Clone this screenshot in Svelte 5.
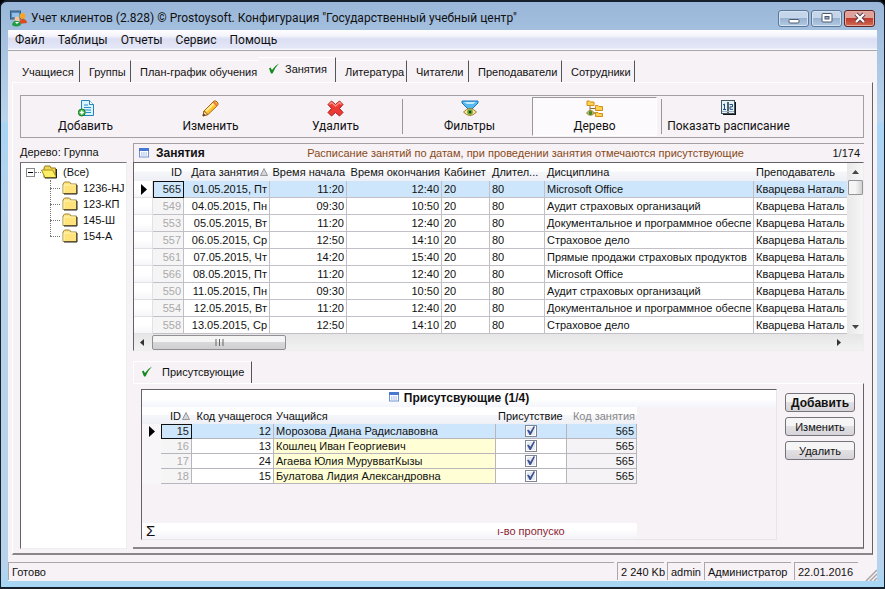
<script>
  const menu = ['Файл', 'Таблицы', 'Отчеты', 'Сервис', 'Помощь'];

  const tabs = [
    { name: 'Учащиеся', width: 64, line: true },
    { name: 'Группы', width: 51, line: true },
    { name: 'План-график обучения', width: 128 },
    { name: 'Занятия', width: 77, line: true, active: true },
    { name: 'Литература', width: 71, line: true },
    { name: 'Читатели', width: 62, line: true },
    { name: 'Преподаватели', width: 93, line: true },
    { name: 'Сотрудники', width: 73, line: true }
  ];

  const tree = ['1236-HJ', '123-КП', '145-Ш', '154-А'];

  const office = 'Microsoft Office';
  const audit = 'Аудит страховых организаций';
  const docs = 'Документальное и программное обеспе';
  const insurance = 'Страховое дело';
  const sales = 'Прямые продажи страховых продуктов';

  const lessons = [
    [565, '01.05.2015, Пт', '11:20', '12:40', office],
    [549, '04.05.2015, Пн', '09:30', '10:50', audit],
    [553, '05.05.2015, Вт', '11:20', '12:40', docs],
    [557, '06.05.2015, Ср', '12:50', '14:10', insurance],
    [561, '07.05.2015, Чт', '14:20', '15:40', sales],
    [566, '08.05.2015, Пт', '11:20', '12:40', office],
    [550, '11.05.2015, Пн', '09:30', '10:50', audit],
    [554, '12.05.2015, Вт', '11:20', '12:40', docs],
    [558, '13.05.2015, Ср', '12:50', '14:10', insurance]
  ];

  const students = [
    [15, 12, 'Морозова Диана Радиславовна'],
    [16, 13, 'Кошлец Иван Георгиевич'],
    [17, 24, 'Агаева Юлия МурувватКызы'],
    [18, 15, 'Булатова Лидия Александровна']
  ];
</script>

{#snippet check()}
  <svg class="tick" width="12" height="11" viewBox="0 0 12 11"><path d="M1 5.500L2.500 4.500L4 7Q7 2.500 11 .5Q7 4.500 4.500 10.500H3Z" fill="#138a1c" /></svg>
{/snippet}

{#snippet gridIcon()}
  <svg class="grid-icon" width="10" height="10" viewBox="0 0 10 10">
    <rect x=".5" y=".5" width="9" height="8.500" fill="#fff" stroke="#6f93d2" />
    <path d="M0 0h10v3H0z" fill="#4878cf" /><path d="M2 5h6M2 7h6" stroke="#8ba9dd" stroke-dasharray="1.500 .7" />
  </svg>
{/snippet}

{#snippet sortMark()}
  <svg class="sort" width="8" height="8" viewBox="0 0 8 8"><path d="M.5 7.500L4 .5L7.500 7.500Z" fill="#d5d5d8" stroke="#98989d" /></svg>
{/snippet}

{#snippet rowMark()}
  <svg class="row-mark" width="6" height="11" viewBox="0 0 6 11"><path d="M0 0L6 5.500L0 11Z" /></svg>
{/snippet}

{#snippet folder()}
  <svg width="16" height="14" viewBox="0 0 16 14">
    <path d="M1 12.500V3l1.500-2h5L9 3h5.500v9.500Z" fill="#ffe27a" stroke="#9b8440" />
    <path d="M2 12V4h11" stroke="#fff6b8" fill="none" /><path d="M15 4v9H2" stroke="#222" fill="none" />
  </svg>
{/snippet}

<div class="window">
  <header class="titlebar">
    <svg width="18" height="17" viewBox="0 0 18 17">
      <rect x=".5" y="1" width="10" height="8" fill="#5487b8" stroke="#345778" /><path d="M2 3h7v4H2z" fill="#8fc0e8" />
      <circle cx="12.500" cy="6" r="3" fill="#f3a52c" /><path d="M9 14q1-6 5-5 3 1 3 4z" fill="#dc4a22" />
      <circle cx="7" cy="9" r="2.500" fill="#f4c795" /><path d="M2 15q1-5 5-4 4 0 4 4-5 3-9 0z" fill="#229c48" /><path d="M5 12h4l-2 2z" fill="#fff" />
    </svg>
    <h1>Учет клиентов (2.828) © Prostoysoft. Конфигурация "Государственный учебный центр"</h1>
    <div class="controls">
      <button aria-label="Свернуть"><svg width="12" height="12" viewBox="0 0 12 12"><rect x="1" y="7.500" width="10" height="3.500" rx="1" fill="#fff" stroke="#4b5a70" /></svg></button>
      <button aria-label="Развернуть"><svg width="12" height="12" viewBox="0 0 12 12"><rect x="1" y="1.500" width="10" height="8.500" rx="1" fill="#fff" stroke="#4b5a70" /><rect x="4" y="4.500" width="4" height="2.500" fill="#91acd0" stroke="#4b5a70" /></svg></button>
      <button class="close" aria-label="Закрыть"><svg width="12" height="12" viewBox="0 0 12 12"><path d="M2 2L10 10M10 2L2 10" stroke="#543d4b" stroke-width="4" /><path d="M2 2L10 10M10 2L2 10" stroke="#fff" stroke-width="2.200" /></svg></button>
    </div>
  </header>

  <div class="client">
    <nav class="menu">
      {#each menu as item}<button>{item}</button>{/each}
    </nav>

    <div class="tabs" role="tablist">
      {#each tabs as tab}
        <button role="tab" aria-selected={!!tab.active} class:line={tab.line} class:active={tab.active} style:width="{tab.width}px">
          {#if tab.active}{@render check()}{/if}{tab.name}
        </button>
      {/each}
    </div>

    <main class="page">
      <div class="toolbar">
        <button>
          <svg width="16" height="17" viewBox="0 0 16 17"><path d="M3.500.5h8l4 4v11h-12z" fill="#d9f3ff" stroke="#2781ba" /><path d="M11.500.5v4h4" fill="#fff" stroke="#2781ba" /><path d="M6 5h4M6 7.500h7M6 10h7M8 12.500h5" stroke="#2d8fc9" /><circle cx="3.800" cy="12.500" r="3.500" fill="#43b649" stroke="#177c27" /><path d="M3.800 10.500v4M1.800 12.500h4" stroke="#fff" stroke-width="1.400" /></svg>
          Добавить
        </button>
        <button>
          <svg width="17" height="17" viewBox="0 0 17 17"><path d="M1 16l1-5L12 1q2-1 4 2 .5 1.500-1 3L6 14.500Z" fill="#ffc52e" stroke="#a56416" /><path d="M4 11L13 2.500" stroke="#ffed9a" stroke-width="2" /><path d="M2 11l4 3.500L1 16z" fill="#f7dab1" stroke="#a56416" /><path d="M11.500 2l4 4" stroke="#e87d4c" stroke-width="2" /><path d="M1 16l.5-2.500L3.500 15z" fill="#333" /></svg>
          Изменить
        </button>
        <button>
          <svg width="17" height="17" viewBox="0 0 17 17"><path d="M4.500 1L8.500 4.500L12.500 1L16 4.500L12.500 8.500L16 12.500L12.500 16L8.500 12.500L4.500 16L1 12.500L4.500 8.500L1 4.500Z" fill="#ec3a35" stroke="#a71d1d" /><path d="M2.500 4.500l2-2 4 3.500 4-3.500 2 2" fill="none" stroke="#ff8f82" stroke-width="1.400" /></svg>
          Удалить
        </button>
        <span class="divider"></span>
        <button>
          <svg width="18" height="17" viewBox="0 0 18 17"><path d="M1 1h16v2l-6 6H7L1 3z" fill="#54baf0" stroke="#1d73b4" /><path d="M3 2h12l-3 2H6z" fill="#c5edff" /><path d="M2.500 12q6.500-7 13 0-6.500 7-13 0z" fill="#f7e4a1" stroke="#a77a20" /><circle cx="9" cy="12" r="2.800" fill="#62a432" /><circle cx="9" cy="12" r="1.200" fill="#1b4215" /></svg>
          Фильтры
        </button>
        <button class="pressed" aria-pressed="true">
          <svg width="17" height="17" viewBox="0 0 17 17"><path d="M4 6v7h7M4 8.500h7" fill="none" stroke="#877040" /><g fill="#ffd34d" stroke="#d28d1c"><path d="M1 5.500V1h2.500l1 1H8v3.500zM9.500 10.500v-5H12l1 1h3.500v4zM9.500 16.500v-4H12l1 1h3.500v3z" /></g><path d="M.5 13q4-5 8 0-4 4.500-8 0z" fill="#eacf80" stroke="#8d7a25" /><circle cx="4.500" cy="13" r="2" fill="#458a28" /></svg>
          Дерево
        </button>
        <span class="divider"></span>
        <button>
          <svg width="15" height="15" viewBox="0 0 15 15"><path d="M2 14.500h12.500V2" fill="none" stroke="#111" stroke-width="1.500" /><rect x=".5" y=".5" width="13" height="13" fill="#e3f1f8" stroke="#44525c" /><path d="M7 2v11" stroke="#111" stroke-width="1.300" /><path d="M2 5l1.500-1v5M2 9.500h3M8.500 4.500h3v2.300h-2.500V9.300h3" fill="none" stroke="#184e85" /><path d="M1 11.500h12" stroke="#9fb4c0" /></svg>
          Показать расписание
        </button>
      </div>

      <div class="columns">
        <aside>
          <div class="tree-title">Дерево: Группа</div>
          <div class="tree">
            <div class="node root">
              <svg class="fold" width="9" height="9" viewBox="0 0 9 9"><rect x=".5" y=".5" width="8" height="8" fill="#fff" stroke="#888" /><path d="M2 4.500h5" stroke="#000" /></svg>
              <span class="dots"></span>
              <svg width="17" height="14" viewBox="0 0 17 14"><path d="M3 12.500V3l1-2h5l1 2h4.500v9.500z" fill="#f5d653" stroke="#8f7b20" /><path d="M.5 5h11l4 7.500H4z" fill="#ffed64" stroke="#a59122" /><path d="M15.500 4v9H4" fill="none" stroke="#222" /></svg>
              <button>(Все)</button>
            </div>
            <div class="branch">
              {#each tree as group}
                <div class="node"><span class="dots"></span>{@render folder()}<button>{group}</button></div>
              {/each}
            </div>
          </div>
        </aside>

        <div class="content">
          <div class="caption">
            {@render gridIcon()}
            <h2>Занятия</h2>
            <p>Расписание занятий по датам, при проведении занятия отмечаются присутствующие</p>
            <span>1/174</span>
          </div>

          <div class="grid">
            <div class="grid-body">
              <table class="lessons">
                <colgroup><col class="w-mark" /><col class="w-id" /><col class="w-date" /><col class="w-start" /><col class="w-end" /><col class="w-room" /><col class="w-length" /><col class="w-subject" /><col /></colgroup>
                <thead>
                  <tr><th></th><th class="num">ID</th><th class="num">Дата занятия{@render sortMark()}</th><th class="num">Время начала</th><th class="num">Время окончания</th><th>Кабинет</th><th>Длител...</th><th>Дисциплина</th><th>Преподаватель</th></tr>
                </thead>
                <tbody>
                  {#each lessons as [id, date, start, end, subject], i}
                    <tr class:selected={i === 0}>
                      <td class="mark">{#if i === 0}{@render rowMark()}{/if}</td>
                      <td class="num id">{id}</td><td class="num">{date}</td><td class="num">{start}</td><td class="num">{end}</td>
                      <td>20</td><td>80</td><td>{subject}</td><td class="teacher">Кварцева Наталь</td>
                    </tr>
                  {/each}
                </tbody>
              </table>
              <div class="vscroll">
                <svg width="7" height="4" viewBox="0 0 7 4"><path d="M0 4L3.500 0L7 4z" fill="#444" /></svg>
                <i></i>
                <svg width="7" height="4" viewBox="0 0 7 4"><path d="M0 0L3.500 4L7 0z" fill="#444" /></svg>
              </div>
            </div>
            <div class="hscroll">
              <svg width="4" height="7" viewBox="0 0 4 7"><path d="M4 0L0 3.500L4 7z" fill="#333" /></svg>
              <i><svg width="9" height="7" viewBox="0 0 9 7"><path d="M1 0v7M4.500 0v7M8 0v7" stroke="#666" /></svg></i>
              <svg class="right" width="4" height="7" viewBox="0 0 4 7"><path d="M0 0L4 3.500L0 7z" fill="#333" /></svg>
            </div>
          </div>

          <div class="subtabs" role="tablist">
            <button role="tab" aria-selected="true">{@render check()}Присутсвующие</button>
          </div>
          <section class="subpage">
            <div class="present">
              <div class="present-title">{@render gridIcon()}<h2>Присутсвующие (1/4)</h2></div>
              <table class="students">
                <colgroup><col class="w-mark" /><col class="w-id" /><col class="w-code" /><col class="w-name" /><col class="w-check" /><col class="w-lesson" /></colgroup>
                <thead>
                  <tr><th></th><th class="num">ID{@render sortMark()}</th><th class="num">Код учащегося</th><th>Учащийся</th><th>Присутствие</th><th class="num muted">Код занятия</th></tr>
                </thead>
                <tbody>
                  {#each students as [id, code, name], i}
                    <tr class:selected={i === 0}>
                      <td class="mark">{#if i === 0}{@render rowMark()}{/if}</td>
                      <td class="num id">{id}</td><td class="num">{code}</td><td class="name">{name}</td>
                      <td class="box"><input type="checkbox" checked aria-label={name} /></td>
                      <td class="num lesson">565</td>
                    </tr>
                  {/each}
                </tbody>
              </table>
              <div class="totals"><b>Σ</b><span>ı-во пропуско</span></div>
            </div>
            <div class="actions">
              <button class="default">Добавить</button>
              <button>Изменить</button>
              <button>Удалить</button>
            </div>
          </section>
        </div>
      </div>
    </main>

    <footer class="status">
      <span class="grow">Готово</span><span class="memory">2 240 Kb</span><span class="user">admin</span><span class="role">Администратор</span><span class="date">22.01.2016</span>
      <svg width="12" height="12" viewBox="0 0 12 12"><path d="M1 12L12 1M5 12L12 5M9 12L12 9" stroke="#aaa5aa" stroke-width="1.500" /></svg>
    </footer>
  </div>
</div>

<style>
  :global(body) { margin: 0; background: #000; }
  * { box-sizing: border-box; }
  .window {
    display: flex; flex-direction: column; min-height: 100vh; padding: 0 7px 6px; overflow: hidden;
    border: 1px solid #15202c; border-width: 2px 1px 2px 1px; border-radius: 7px 7px 0 0;
    background: linear-gradient(#9ab6d8 0, #a4c0df 30px, #bad4ec 118px, #a9d5f5 122px, #b8d2ec 220px, #b8d2ec 560px, #a6d6f4 100%);
    font: 11px/14px "Liberation Sans", Arial, sans-serif; color: #111;
  }
  button { font: inherit; color: inherit; border: 0; background: none; padding: 0; margin: 0; white-space: nowrap; }
  h1, h2, p { margin: 0; font-size: 12px; white-space: nowrap; }
  svg { display: block; flex: none; }

  .titlebar { display: flex; align-items: center; height: 28px; gap: 3px; padding: 4px 2px 0; }
  h1 { flex: 1; font: 12px/16px Roboto, sans-serif; }
  .controls { display: flex; gap: 2px; }
  .controls button {
    display: grid; place-items: center; width: 31px; height: 17px; border: 1px solid #5c7697; border-radius: 3px;
    background: linear-gradient(#c5d6ea 45%, #98b3d2 50%, #b4cae2); box-shadow: inset 0 0 0 1px #d4e2f1;
  }
  .controls .close { border-color: #5f2424; background: linear-gradient(#dfa29a 45%, #bf3b2e 50%, #cf6b50); box-shadow: inset 0 0 0 1px #e5aaa0; }

  .client { flex: 1; display: flex; flex-direction: column; background: #f7f2f6; }
  .menu {
    display: flex; gap: 13px; height: 21px; padding: 0 7px; border-bottom: 1px solid #a8a5aa;
    background: linear-gradient(#fff 0, #f3f3fb 30%, #dcdff3 45%, #e4e7f7 90%, #fff);
    font: 12px/20px Roboto, sans-serif;
  }

  .tabs { display: flex; align-items: flex-end; height: 31px; padding: 0 8px; }
  .tabs button { display: flex; align-items: center; gap: 5px; height: 22px; padding-left: 6px; border-top: 1px solid #fff; }
  .tabs button:not(:first-child) { padding-left: 9px; }
  .tabs .line { border-right: 1px solid #555; }
  .tabs .active { height: 25px; padding-bottom: 3px; }

  .page { flex: 1; display: flex; flex-direction: column; margin: 0 4px; padding: 12px 8px 4px 7px; border: 1px solid #fff; border-right: 1px solid #666166; border-bottom: 2px solid #8a858a; }
  .toolbar { display: flex; height: 43px; padding: 1px 2px; border: 1px solid #a39fa3; font: 12px/16px Roboto, sans-serif; }
  .toolbar button { display: flex; flex-direction: column; align-items: center; justify-content: space-between; width: 125px; padding: 2px 0 1px; border: 1px solid transparent; }
  .toolbar .pressed { border-color: #9a969a #fff #fff #9a969a; background: #fcfafc; }
  .divider { width: 1px; margin: 2px 4px; background: #9a969a; }

  .columns { flex: 1; display: flex; gap: 6px; padding-top: 5px; }
  aside { display: flex; flex-direction: column; width: 107px; }
  .tree-title { height: 19px; line-height: 18px; }
  .tree { flex: 1; padding: 1px 0 0 5px; background: #fff; border: 1px solid #eee; border-top-color: #777; border-left: 1px solid #666166; overflow: hidden; }
  .node { display: flex; align-items: center; height: 16px; }
  .node .dots { width: 10px; margin-right: 2px; border-top: 1px dotted #777; }
  .root .dots { width: 6px; margin-right: 0; }
  .node button { margin-left: 5px; }
  .branch { position: relative; margin-left: 24px; }
  .branch::before { content: ""; position: absolute; left: 0; top: 0; height: 56px; border-left: 1px dotted #777; }

  .content { flex: 1; min-width: 0; display: flex; flex-direction: column; }
  .caption { display: flex; align-items: center; height: 19px; padding: 0 4px 0 5px; border: 1px solid #a39fa3; border-width: 1px 0 0 1px; }
  .caption h2 { margin-left: 7px; }
  .caption p { flex: 1; padding-left: 14px; text-align: center; font-size: 11px; color: #8a4a17; }

  .grid { border: 1px solid #eee; border-top-color: #666166; border-left-color: #666166; background: #fff; }
  .grid-body { display: flex; }
  table { table-layout: fixed; border-collapse: separate; border-spacing: 0; }
  .lessons { flex: 1; width: 0; min-width: 0; }
  .w-mark { width: 19px; } .w-id { width: 31px; } .w-date { width: 86px; } .w-start { width: 77px; } .w-end { width: 95px; }
  .w-room { width: 48px; } .w-length { width: 55px; } .w-subject { width: 209px; }
  .w-code { width: 82px; } .w-name { width: 222px; } .w-check { width: 71px; } .w-lesson { width: 70px; }
  th, td { height: 17px; padding: 0 2px; overflow: hidden; white-space: nowrap; line-height: 16px; text-align: left; font-weight: 400; }
  th { height: 18px; background: linear-gradient(#fff 45%, #f5f6fa 50%, #eff0f5); }
  td { border-right: 1px solid #c2c0c6; border-bottom: 1px solid #c2c0c6; background: #fff; }
  td:last-child { border-right: 0; }
  .teacher { padding-right: 0; }
  .num { text-align: right; }
  .id { color: #aaa; background: #f6f5f6; }
  .mark { padding: 0 0 0 7px; border-color: #e3e1e6; background: linear-gradient(#fff 50%, #f6f5f9); }
  .selected td:not(.mark) { background: #cde6fb; }
  .selected .id { color: #222; outline: 1px solid #111; outline-offset: -1px; }
  .sort { display: inline-block; margin-left: 1px; }
  .vscroll { display: flex; flex-direction: column; align-items: center; width: 16px; padding: 7px 0 5px; background: linear-gradient(90deg, #e9e8e9, #f7f6f7); }
  .vscroll i { width: 15px; height: 15px; margin: 6px 0 auto; border: 1px solid #969499; border-radius: 1px; background: linear-gradient(90deg, #f5f5f5 50%, #d2d2d4); }
  .hscroll { display: flex; align-items: center; height: 16px; padding: 0 6px; background: linear-gradient(#e7e6e7, #f3f2f3); }
  .hscroll i { display: grid; place-items: center; width: 134px; height: 15px; margin-left: 8px; border: 1px solid #929095; border-radius: 2px; background: linear-gradient(#f5f5f5 45%, #d8d8da 50%, #cfcfd2); }
  .hscroll .right { margin-left: auto; margin-right: 16px; }

  .subtabs { height: 22px; margin-top: 10px; }
  .subtabs button { display: flex; align-items: center; gap: 9px; height: 22px; padding: 0 7px 2px; border: 1px solid #fff; border-width: 1px 0 0 1px; border-right: 1px solid #555; }
  .subpage { flex: 1; display: flex; gap: 8px; padding: 5px 8px 7px; border: 1px solid #fff; border-left: 0; border-right: 1px solid #666166; border-bottom: 2px solid #8a858a; }
  .present { flex: 1; min-width: 0; display: flex; flex-direction: column; border: 1px solid #e8e4e8; border-top-color: #666166; border-left-color: #666166; }
  .present-title { display: flex; justify-content: center; gap: 5px; height: 17px; background: linear-gradient(#fff 50%, #f4f5fb); }
  .present-title h2 { line-height: 17px; }
  .present-title :global(svg) { margin-top: 2px; }
  .students { width: 495px; }
  .students th { height: 17px; }
  .students td { height: 15px; line-height: 14px; border-color: #b8b6bc; }
  .students .mark { border: 0; background: #f9f6fa; }
  .students td:last-child { border-right: 1px solid #b8b6bc; }
  .students .name { background: #fffed4; }
  .students .lesson { background: #f5f3f5; }
  .students .selected .name, .students .selected .lesson { background: #cde6fb; }
  .students .muted { color: #888; }
  .students .box { padding: 0; text-align: center; }
  input { appearance: none; display: block; width: 12px; height: 12px; margin: 0 auto; border: 1px solid #7f8594; background: #e6e9ef; box-shadow: inset 0 0 0 1px #fff; }
  input::before { content: ""; display: block; width: 8px; height: 9px; margin: 0 1px; background: #3d5295; clip-path: polygon(0 45%, 22% 42%, 42% 65%, 85% 0, 100% 8%, 48% 100%, 32% 100%); }
  .totals { display: flex; align-items: center; width: 495px; height: 16px; margin-top: auto; background: linear-gradient(#fff 40%, #f3f3f8); }
  .totals b { width: 355px; padding-left: 4px; font-size: 15px; font-weight: 400; }
  .totals span { color: #8c1c35; }
  .actions { display: flex; flex-direction: column; gap: 5px; width: 70px; padding-top: 4px; }
  .actions button { height: 19px; border: 1px solid #77737a; border-radius: 3px; background: linear-gradient(#f6f5f6 45%, #e2e0e3 50%, #d6d4d8); }
  .actions .default { font-size: 12px; font-weight: 700; }

  .status { display: flex; gap: 3px; height: 26px; padding-top: 7px; }
  .status span { height: 18px; padding-left: 3px; border: 1px solid #aaa6aa; border-width: 1px 0 0 1px; line-height: 18px; white-space: nowrap; }
  .status .grow { flex: 1; }
  .memory { width: 47px; } .user { width: 34px; } .role { width: 87px; } .date { width: 64px; }
  .status svg { align-self: flex-end; margin-left: 4px; }
</style>
